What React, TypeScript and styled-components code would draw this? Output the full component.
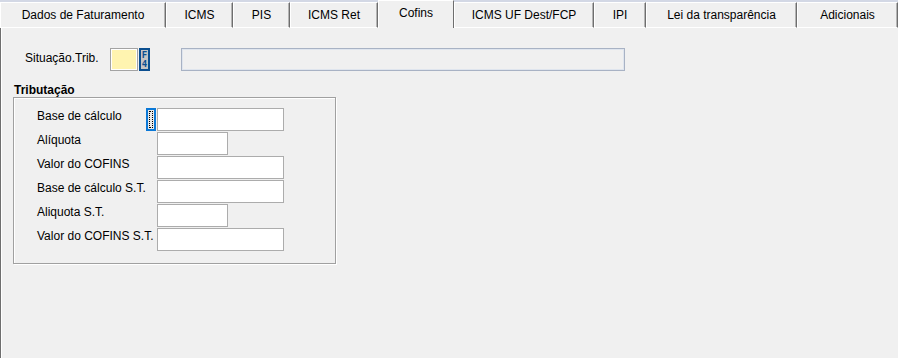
import React from "react";
import styled, { createGlobalStyle } from "styled-components";

const Global = createGlobalStyle`
  html, body { margin: 0; padding: 0; background: #f0f0f0; }
  body { font-family: "Liberation Sans", Arial, sans-serif; font-size: 12px; color: #000; }
  * { box-sizing: border-box; }
`;

const Page = styled.div`
  width: 898px;
  height: 358px;
  display: flex;
  flex-direction: column;
  overflow: hidden;
  background: #f0f0f0;
`;

const TabBar = styled.div`
  height: 28px;
  display: flex;
  align-items: flex-end;
  background: linear-gradient(#d3d8e5 0 2px, #f0f0f0 2px);
`;

const Tab = styled.div<{ $w: number; $active?: boolean }>`
  width: ${(p) => p.$w}px;
  flex: none;
  height: ${(p) => (p.$active ? 28 : 26)}px;
  display: flex;
  justify-content: center;
  align-items: ${(p) => (p.$active ? "flex-start" : "center")};
  padding-top: ${(p) => (p.$active ? 5 : 0)}px;
  background: #f0f0f0;
  border-top: 1px solid #ffffff;
  border-left: 1px solid #ffffff;
  border-right: 1px solid #6e6e6e;
  border-bottom: ${(p) => (p.$active ? "none" : "1px solid #ffffff")};
  box-shadow: ${(p) => (p.$active ? "none" : "inset -1px 0 0 #b4b4b4")};
  white-space: nowrap;
`;

const Panel = styled.div`
  flex: 1;
  border-left: 1px solid #6e6e6e;
  box-shadow: inset 1px 0 0 #ffffff;
  padding: 20px 0 0 0;
  display: flex;
  flex-direction: column;
`;

const TopRow = styled.div`
  display: flex;
  align-items: flex-start;
  height: 23px;
`;

const TopLabel = styled.div`
  width: 109px;
  padding-left: 24px;
  padding-top: 3px;
  line-height: 14px;
`;

const CodeInput = styled.div`
  width: 28px;
  height: 23px;
  border: 1px solid #a3a3a3;
  box-shadow: inset 1px 1px 0 #fff, inset -1px -1px 0 #fff;
  background: #fff4b0;
`;

const F4Button = styled.div`
  width: 11px;
  height: 23px;
  margin-left: 1px;
  border: 2px solid #0b4f90;
  background: #c4c4c4;
  display: flex;
  flex-direction: column;
  align-items: center;
  justify-content: center;
  font-family: "DejaVu Sans Mono", monospace;
  font-weight: bold;
  font-size: 9px;
  line-height: 9px;
  color: #0b4f90;
`;

const DescField = styled.div`
  width: 444px;
  height: 23px;
  margin-left: 31px;
  border: 1px solid #a8b2c4;
  box-shadow: inset 1px 1px 0 #dfe5ee, inset -1px -1px 0 #dfe5ee;
  background: #f0f0f0;
`;

const GroupTitle = styled.div`
  margin-top: 12px;
  margin-left: 13px;
  font-weight: bold;
  line-height: 14px;
  height: 14px;
`;

const GroupBox = styled.div`
  margin-left: 12px;
  width: 323px;
  height: 167px;
  border: 1px solid #a0a0a0;
  box-shadow: inset 1px 1px 0 #fff, 1px 1px 0 #fff;
  padding: 10px 0 0 23px;
  display: grid;
  grid-template-columns: 108px 10px auto;
  column-gap: 1px;
  row-gap: 1px;
  grid-auto-rows: 23px;
  align-content: start;
`;

const FieldLabel = styled.div`
  line-height: 14px;
  padding-top: 1px;
  white-space: nowrap;
`;

const FocusButton = styled.div`
  width: 10px;
  height: 23px;
  border: 2px solid #0a78d7;
  background: #e8e8e8;
  position: relative;
  &::after {
    content: "";
    position: absolute;
    inset: 1px;
    border: 1px dotted #000;
  }
`;

const Spacer = styled.div``;

const TextInput = styled.div<{ $w: number }>`
  width: ${(p) => p.$w}px;
  height: 23px;
  border: 1px solid #acacac;
  background: #ffffff;
`;

const tabs = [
  { label: "Dados de Faturamento", w: 166 },
  { label: "ICMS", w: 67 },
  { label: "PIS", w: 57 },
  { label: "ICMS Ret", w: 88 },
  { label: "Cofins", w: 76, active: true },
  { label: "ICMS UF Dest/FCP", w: 140 },
  { label: "IPI", w: 52 },
  { label: "Lei da transparência", w: 151 },
  { label: "Adicionais", w: 101 },
];

const fields = [
  { label: "Base de cálculo", w: 127, focus: true },
  { label: "Alíquota", w: 71 },
  { label: "Valor do COFINS", w: 127 },
  { label: "Base de cálculo S.T.", w: 127 },
  { label: "Aliquota S.T.", w: 71 },
  { label: "Valor do COFINS S.T.", w: 127 },
];

export default function App() {
  return (
    <Page>
      <Global />
      <TabBar>
        {tabs.map((t) => (
          <Tab key={t.label} $w={t.w} $active={t.active}>
            {t.label}
          </Tab>
        ))}
      </TabBar>
      <Panel>
        <TopRow>
          <TopLabel>Situação.Trib.</TopLabel>
          <CodeInput />
          <F4Button>
            <span>F</span>
            <span>4</span>
          </F4Button>
          <DescField />
        </TopRow>
        <GroupTitle>Tributação</GroupTitle>
        <GroupBox>
          {fields.map((f) => (
            <React.Fragment key={f.label}>
              <FieldLabel>{f.label}</FieldLabel>
              {f.focus ? <FocusButton /> : <Spacer />}
              <TextInput $w={f.w} />
            </React.Fragment>
          ))}
        </GroupBox>
      </Panel>
    </Page>
  );
}
